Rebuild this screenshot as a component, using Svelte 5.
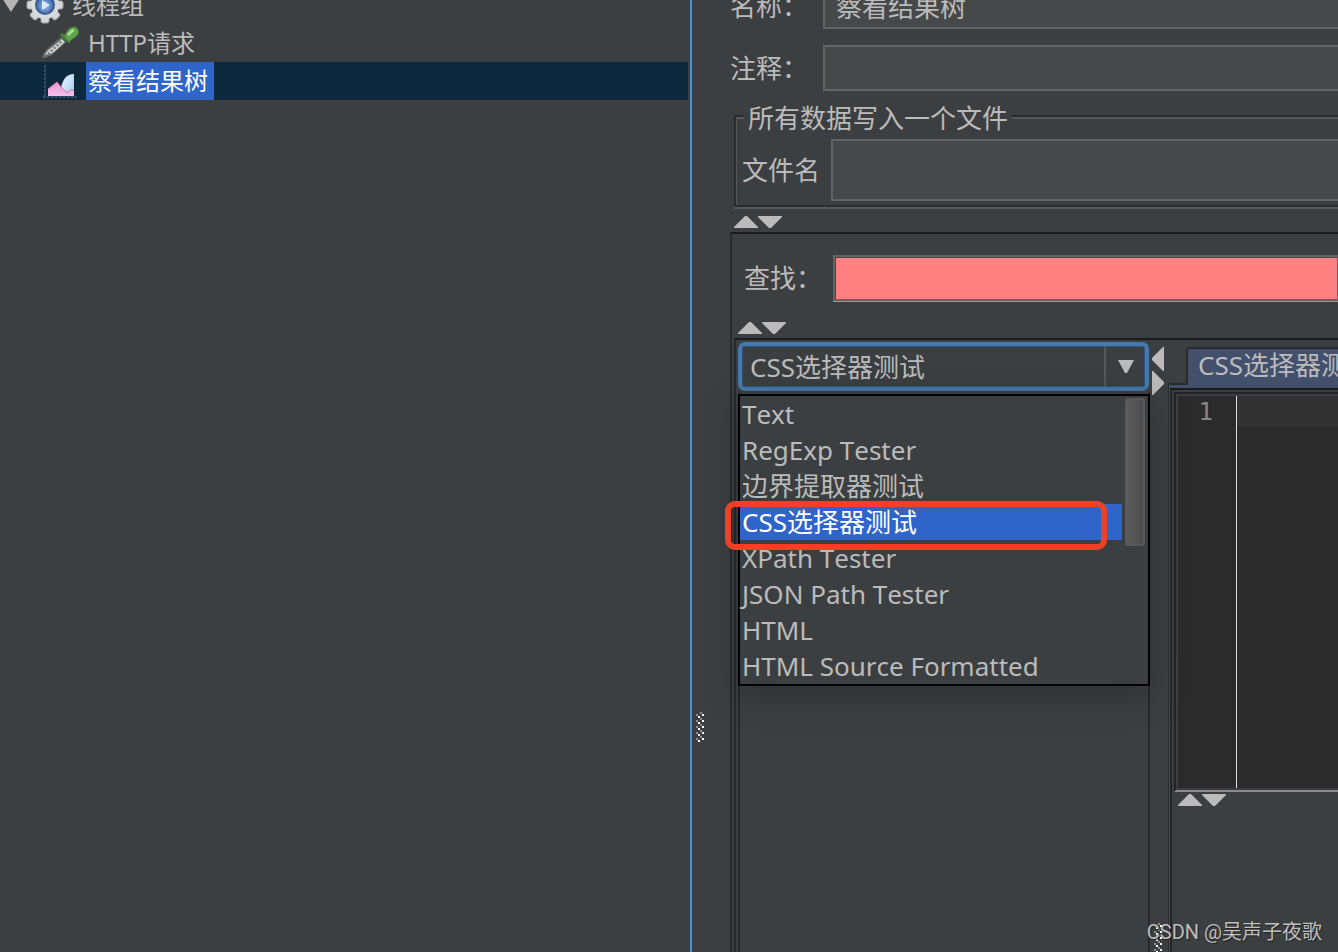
<!-- App.svelte -->
<script>
  let name = $state('察看结果树');
  let comment = $state('');
  let fileName = $state('');
  let query = $state('');
  let source = $state('');
  let renderer = $state('CSS选择器测试');

  // Result renderers offered in the drop-down
  const renderers = [
    'Text',
    'RegExp Tester',
    '边界提取器测试',
    'CSS选择器测试',
    'XPath Tester',
    'JSON Path Tester',
    'HTML',
    'HTML Source Formatted'
  ];
</script>

{#snippet collapseButtons()}
  <button class="arrow" aria-label="Collapse up">
    <svg width="24" height="12" viewBox="0 0 24 12"><path d="M11 0h2l11 11v1H0v-1z" /></svg>
  </button>
  <button class="arrow" aria-label="Collapse down">
    <svg width="24" height="12" viewBox="0 0 24 12"><path d="M0 0h24v1L13 12h-2L0 1z" /></svg>
  </button>
{/snippet}

{#snippet grip(id)}
  <svg class="grip" width="8" height="30" aria-hidden="true">
    <defs>
      <pattern {id} width="8" height="6" patternUnits="userSpaceOnUse">
        <path d="M4 0h2v2h-2zM0 2h2v2H0z" fill="#8f8f8f" />
        <path d="M6 2h2v2h-2zM2 4h2v2H2z" fill="#fff" />
      </pattern>
    </defs>
    <rect width="8" height="30" fill="url(#{id})" />
  </svg>
{/snippet}

<div class="app">
  <nav class="tree">
    <button class="node root">
      <svg class="toggle" width="18" height="14" viewBox="0 0 18 14"><path d="M0 0h18L9 14z" fill="#b4b4b4" /></svg>
      <svg width="38" height="38" viewBox="0 0 38 38">
        <defs>
          <radialGradient id="gear-core" cx="0.5" cy="0.55" r="0.6">
            <stop offset="0" stop-color="#a3c0e6" />
            <stop offset="0.6" stop-color="#5580bd" />
            <stop offset="1" stop-color="#2c4f92" />
          </radialGradient>
        </defs>
        <g fill="#d4d6d8" stroke="#a5a8ab" stroke-width="1">
          {#each [0, 45, 90, 135] as angle}
            <rect x="15" y="1" width="8" height="36" rx="2" transform="rotate({angle} 19 19)" />
          {/each}
        </g>
        <circle cx="19" cy="19" r="14" fill="#d8dadc" />
        <circle cx="19" cy="19" r="9" fill="url(#gear-core)" stroke="#3d5c94" stroke-width="2" />
        <path d="M16 14l8 5-8 5z" fill="#dbe9fb" />
      </svg>
      <span class="text">线程组</span>
    </button>
    <button class="node">
      <svg width="38" height="38" viewBox="0 0 38 38">
        <path d="M0 34c1-5 3-7 6-10l13-11 5 5-13 12c-4 3-6 3-9 4z" fill="#666a68" />
        <path d="M3 31c1-3 3-5 6-7l11-9 3 3-11 10c-3 2-5 2-9 3z" fill="#c9cec9" />
        <path d="M6 30l14-13" stroke="#6d736e" stroke-width="2" stroke-dasharray="2 2" />
        <path d="M20 11l7 6" stroke="#437a35" stroke-width="4" stroke-linecap="round" />
        <path d="M22 12c3-3 4-9 10-9 4 0 5 4 4 7-2 4-6 4-9 8z" fill="#5fa34b" stroke="#467f38" />
        <path d="M26 11c2-2 3-4 6-5" stroke="#a3dc8a" stroke-width="3" fill="none" />
      </svg>
      <span class="text">HTTP请求</span>
    </button>
    <button class="node selected">
      <svg width="38" height="38" viewBox="0 0 38 38">
        <defs>
          <linearGradient id="area-pink" x1="0" y1="0" x2="0" y2="1">
            <stop offset="0" stop-color="#e79ad6" />
            <stop offset="1" stop-color="#f5bdea" />
          </linearGradient>
          <linearGradient id="area-blue" x1="0" y1="0" x2="1" y2="1">
            <stop offset="0" stop-color="#e9f2fb" />
            <stop offset="0.5" stop-color="#c8e0f8" />
            <stop offset="1" stop-color="#9cc8f2" />
          </linearGradient>
        </defs>
        <path d="M3 3v32M1 35h34" stroke="#41586a" stroke-width="1.5" stroke-dasharray="3 1" />
        <path d="M19 27c0-4 2-8 4-11 2-2 5-4 9-4v17l-5 4z" fill="url(#area-blue)" />
        <path d="M6 34v-7l4-3 5-4 4 5 3 3 4 3 2-3h4v6z" fill="url(#area-pink)" />
        <path d="M6 27l4-3 5-4 4 5 3 3 4 3 2-3h4" fill="none" stroke="#d678ae" />
      </svg>
      <span class="text">察看结果树</span>
    </button>
  </nav>

  <div class="divider">{@render grip('grip-main')}</div>

  <main class="editor">
    <div class="row first">
      <label for="name">名称：</label>
      <input id="name" bind:value={name} />
    </div>
    <div class="row">
      <label for="comment">注释：</label>
      <input id="comment" bind:value={comment} />
    </div>

    <fieldset>
      <legend>所有数据写入一个文件</legend>
      <div class="file-row">
        <label for="file">文件名</label>
        <input id="file" bind:value={fileName} />
      </div>
    </fieldset>

    <div class="arrows outer">{@render collapseButtons()}</div>

    <section class="results">
      <div class="search">
        <label for="search">查找：</label>
        <input id="search" bind:value={query} />
      </div>
      <div class="arrows inner">{@render collapseButtons()}</div>

      <div class="split">
        <div class="list-pane">
          <div class="combo">
            <select aria-label="Renderer" bind:value={renderer}>
              {#each renderers as item}
                <option>{item}</option>
              {/each}
            </select>
            <span class="combo-arrow">
              <svg width="16" height="13" viewBox="0 0 16 13"><path d="M0 0h16L9 13H7z" fill="#bbb" /></svg>
            </span>
            <div class="popup">
              <div class="options" role="listbox" aria-label="Renderers">
                {#each renderers as item}
                  <button
                    class="option"
                    class:active={item === renderer}
                    role="option"
                    aria-selected={item === renderer}
                    onclick={() => (renderer = item)}
                  >
                    {item}
                  </button>
                {/each}
              </div>
              <div class="scrollbar"><div class="thumb"></div></div>
              <div class="highlight"></div>
            </div>
          </div>
          <div class="list"></div>
        </div>

        <div class="split-bar">
          <button class="arrow" aria-label="Collapse left">
            <svg width="12" height="24" viewBox="0 0 12 24"><path d="M12 0v24h-1L0 13v-2L11 0z" /></svg>
          </button>
          <button class="arrow" aria-label="Collapse right">
            <svg width="12" height="24" viewBox="0 0 12 24"><path d="M0 0h1l11 11v2L1 24H0z" /></svg>
          </button>
          {@render grip('grip-results')}
        </div>

        <div class="tabs">
          <button class="tab">CSS选择器测试</button>
          <div class="tab-body">
            <div class="tab-content">
              <div class="code">
                <div class="gutter">1</div>
                <textarea aria-label="Response source" bind:value={source}></textarea>
              </div>
              <div class="arrows lower">{@render collapseButtons()}</div>
            </div>
          </div>
        </div>
      </div>
    </section>
  </main>

  <div class="watermark">CSDN @吴声子夜歌</div>
</div>

<style>
  :global(body) {
    background: #3c3f41;
  }

  .app {
    position: relative;
    display: flex;
    height: 100vh;
    overflow: hidden;
    background: #3c3f41;
    color: #bbb;
    font-family: 'Noto Sans', 'Noto Sans CJK SC', sans-serif;
    font-size: 26px;
    font-kerning: none;
    line-height: 30px;
  }

  .app * {
    box-sizing: border-box;
  }

  button,
  input,
  select,
  textarea {
    margin: 0;
    padding: 0;
    border: 0;
    border-radius: 0;
    outline: 0;
    background: none;
    color: inherit;
    font: inherit;
    font-kerning: inherit;
  }

  svg {
    display: block;
    flex: none;
  }

  label,
  legend,
  button {
    white-space: nowrap;
  }

  /* Test plan tree */
  .tree {
    flex: 0 0 692px;
    padding-right: 2px;
    border-right: 2px solid #4a90d9;
    font-size: 24px;
  }

  .node {
    display: flex;
    align-items: center;
    gap: 6px;
    width: 100%;
    height: 38px;
    padding-left: 42px;
  }

  /* The list is scrolled, so the first row is cut off */
  .node.root {
    margin-top: -14px;
    padding-left: 2px;
  }

  .selected {
    background: #0d293e;
    color: #fff;
  }

  .text {
    height: 38px;
    padding: 0 6px 0 2px;
    line-height: 38px;
  }

  .selected .text {
    background: #2f65ca;
  }

  .divider {
    flex: 0 0 38px;
    padding: 712px 0 0 4px;
  }

  /* Listener settings */
  .editor {
    display: flex;
    flex: 1;
    flex-direction: column;
    min-width: 0;
  }

  .row {
    display: flex;
    align-items: center;
    margin-top: 16px;
  }

  .row.first {
    margin-top: -17px;
  }

  .row label {
    flex: 0 0 93px;
  }

  input {
    flex: 1;
    min-width: 0;
    height: 46px;
    padding: 0 11px;
    border: 2px solid #646464;
    border-right: 0;
    background: #45494a;
  }

  /* Etched border: dark line with a light one beside it */
  fieldset {
    min-width: 0;
    margin: 8px 0 0 4px;
    padding: 6px 0 4px 6px;
    border: 2px solid #2a2c2e;
    border-right: 0;
    box-shadow: inset 1px 2px #55595b, 0 2px #55595b;
  }

  legend {
    margin-left: 2px;
    padding: 4px 4px 0;
    background: #3c3f41;
  }

  .file-row {
    display: flex;
    align-items: center;
    gap: 11px;
  }

  .file-row input {
    height: 62px;
  }

  .arrows {
    display: flex;
  }

  .arrow {
    fill: #bbb;
  }

  .outer {
    margin: 9px 0 4px 4px;
  }

  .inner {
    margin: 21px 0 4px 6px;
  }

  .lower {
    margin: 2px 0 0 4px;
  }

  .results {
    display: flex;
    flex: 1;
    flex-direction: column;
    border-top: 2px solid #191b1d;
    border-left: 2px solid #27292b;
  }

  .search {
    display: flex;
    align-items: center;
    padding: 21px 0 0 12px;
  }

  .search label {
    flex: 0 0 89px;
  }

  .search input {
    border-right: 1px solid #646464;
    background: #ff8080;
    box-shadow: inset 1px 1px #45494a, 0 1px #d98084;
  }

  .split {
    display: flex;
    flex: 1;
    margin-left: 2px;
    border-top: 2px solid #191b1d;
    border-left: 2px solid #27292b;
  }

  .list-pane {
    display: flex;
    flex: 0 0 412px;
    flex-direction: column;
    margin-left: 2px;
    padding-top: 2px;
  }

  .list {
    flex: 1;
    margin-top: 2px;
    border: 2px solid #27292b;
    border-width: 0 2px;
  }

  /* Renderer drop-down */
  .combo {
    position: relative;
    display: flex;
    height: 49px;
    margin-right: 1px;
    border: 4px solid #4679ae;
    border-radius: 7px;
    box-shadow: inset 0 0 0 1px #315477;
  }

  .combo select {
    flex: 1;
    min-width: 0;
    padding-left: 8px;
    appearance: none;
  }

  .combo-arrow {
    display: flex;
    flex: 0 0 41px;
    align-items: center;
    justify-content: center;
    border-left: 2px solid #55585a;
    pointer-events: none;
  }

  .popup {
    position: absolute;
    z-index: 2;
    top: 48px;
    right: -5px;
    left: -4px;
    display: flex;
    border: 2px solid #000;
    background: #3c3f41;
    box-shadow: 0 10px 36px rgba(0, 0, 0, 0.25);
  }

  .options {
    flex: 1;
  }

  .option {
    display: block;
    width: 100%;
    height: 36px;
    padding-left: 2px;
    text-align: left;
    line-height: 36px;
  }

  .option.active {
    background: #2f65ca;
    color: #fff;
  }

  .scrollbar {
    flex: 0 0 26px;
    padding: 2px 3px;
  }

  .thumb {
    height: 148px;
    border: 2px solid #595959;
    border-radius: 3px;
    background: linear-gradient(90deg, #5c5c5c, #4d4d4d);
  }

  .highlight {
    position: absolute;
    top: 105px;
    right: 41px;
    left: -15px;
    height: 49px;
    border: 6px solid #ee4126;
    border-radius: 10px;
    pointer-events: none;
  }

  .split-bar {
    display: flex;
    flex: 0 0 18px;
    flex-direction: column;
    align-items: flex-start;
    padding: 7px 0 0 2px;
  }

  .split-bar .grip {
    margin: 528px 0 0 2px;
  }

  /* Renderer output */
  .tabs {
    display: flex;
    flex: 1;
    flex-direction: column;
    min-width: 0;
    padding-top: 7px;
  }

  .tab {
    z-index: 1;
    align-self: flex-start;
    height: 38px;
    margin: 0 0 -2px 18px;
    padding: 0 10px 4px;
    border: 2px solid #282b2e;
    border-bottom: 0;
    border-radius: 4px 4px 0 0;
    background: #43506c;
    line-height: 32px;
  }

  .tab-body {
    display: flex;
    flex: 1;
    padding: 3px 0 0 1px;
    border-top: 2px solid #282b2e;
    border-left: 1px solid #282b2e;
    background: #43506c;
  }

  .tab-content {
    flex: 1;
    min-width: 0;
    padding: 2px 0 0 2px;
    border-top: 2px solid #191b1d;
    border-left: 2px solid #222426;
    background: #3c3f41;
  }

  .code {
    display: flex;
    height: 400px;
    padding: 2px 0 2px 2px;
    border-top: 2px solid #222426;
    border-bottom: 2px solid #8a8b90;
    border-left: 2px solid #222426;
  }

  .gutter {
    flex: 0 0 58px;
    padding-right: 23px;
    background: #2b2b2b;
    color: #888;
    font-family: 'DejaVu Sans Mono', monospace;
    font-size: 24px;
    line-height: 32px;
    text-align: right;
  }

  textarea {
    flex: 1;
    min-width: 0;
    border-left: 1px solid #ddd;
    background: linear-gradient(#323232 30px, #2b2b2b 30px);
    resize: none;
  }

  .watermark {
    position: absolute;
    right: 16px;
    bottom: 5px;
    color: #bdbebf;
    font-family: Roboto, 'Noto Sans CJK SC', sans-serif;
    font-size: 20px;
    text-shadow: 1px 1px 1px #222;
  }
</style>
